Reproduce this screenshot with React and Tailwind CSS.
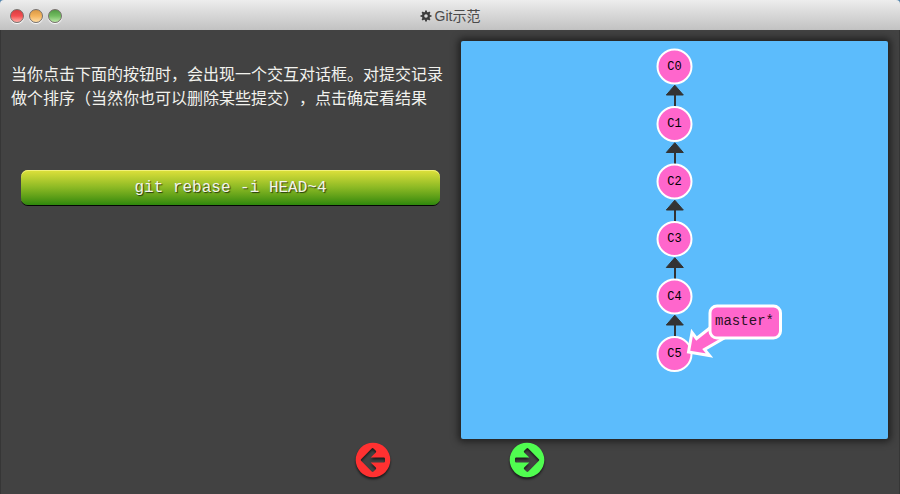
import React from "react";

const commits = ["C0", "C1", "C2", "C3", "C4", "C5"];
const STEP = 57.5;
const teeth = [0, 45, 90, 135, 180, 225, 270, 315];

function Light({ className }) {
  return (
    <span
      className={`h-[14px] w-[14px] rounded-full border-[1.5px] border-[#77706c] shadow-[0_1px_1px_#fff] ${className}`}
    />
  );
}

function Cog() {
  return (
    <svg viewBox="0 0 12 12" className="mr-[3px] h-3 w-3 fill-[#3a3a3a]">
      {teeth.map((a) => (
        <path key={a} d="M4.9 2.6 5.2.5h1.6l.3 2.1z" transform={`rotate(${a} 6 6)`} />
      ))}
      <circle cx="6" cy="6" r="2.9" fill="none" stroke="#3a3a3a" strokeWidth="2.2" />
    </svg>
  );
}

function TitleBar() {
  return (
    <header className="grid h-[30px] shrink-0 grid-cols-[1fr_auto_1fr] items-center rounded-t-[4px] bg-linear-to-b from-[#ededed] to-[#c2c2c2]">
      <div className="flex gap-[5px] pl-[10px] pt-[1px]">
        <Light className="bg-linear-to-b from-[#d93d40] via-[#f34d50] to-[#ffaaa6]" />
        <Light className="bg-linear-to-b from-[#d99845] via-[#f4b45c] to-[#ffdda4]" />
        <Light className="bg-linear-to-b from-[#529b44] via-[#72bd61] to-[#b9e7a5]" />
      </div>
      <div className="flex items-center pt-[2px] font-['Liberation_Sans','Noto_Sans_CJK_SC',sans-serif] text-[14px] leading-5 text-[#4a4a4a]">
        <Cog />
        <span>Git示范</span>
      </div>
      <div />
    </header>
  );
}

function CommitTree() {
  return (
    <svg viewBox="0 0 427 398" className="block h-[398px] w-[427px]">
      {commits.map((name, i) => {
        const y = 25.5 + i * STEP;
        return (
          <g key={name}>
            {i > 0 && (
              <g fill="#333">
                <rect x="213" y={y - 30} width="2" height="14" />
                <path
                  d={`M213.800 ${y - 38.8}l8.5 9.8h-17z`}
                  stroke="#333"
                  strokeWidth="1"
                  strokeLinejoin="round"
                />
              </g>
            )}
            <circle cx="213.5" cy={y} r="17" fill="#ff66cc" stroke="#fff" strokeWidth="2" />
            <text
              x="213.5"
              y={y + 3.3}
              textAnchor="middle"
              className="fill-black font-['Liberation_Mono',monospace] text-[12px]"
            >
              {name}
            </text>
          </g>
        );
      })}
      <path
        d="M227.5 311L231 291.500L235.500 297.500L252 284.500L265 296L243.500 308.500L248.500 314.500Z"
        fill="#ff66cc"
        stroke="#fff"
        strokeWidth="3"
      />
      <rect x="249" y="265" width="70.500" height="32" rx="7" fill="#ff66cc" stroke="#fff" strokeWidth="3" />
      <text
        x="254"
        y="284"
        textLength="59"
        className="fill-[#2b1123] font-['Liberation_Mono',monospace] text-[14px]"
      >
        master*
      </text>
    </svg>
  );
}

function NavButton({ flip, className }) {
  return (
    <button className={`h-[36px] w-[36px] ${className}`}>
      <svg
        viewBox="0 0 36 36"
        className="h-[36px] w-[36px] overflow-visible drop-shadow-[0_2px_1px_rgba(0,0,0,0.6)]"
      >
        <path
          transform={flip ? "translate(36 0) scale(-1 1)" : undefined}
          fill="currentColor"
          fillRule="evenodd"
          d="M18 .7a17.300 17.300 0 1 1 0 34.600a17.300 17.300 0 0 1 0-34.600ZM6.100 17.200L16.700 6.400Q17.600 5.500 18.500 6.400L20.800 8.700Q21.700 9.600 20.800 10.500L15.700 15.600H28.800Q30 15.600 30 16.800V19.200Q30 20.400 28.800 20.400H15.700L20.800 25.500Q21.700 26.400 20.800 27.300L18.500 29.600Q17.600 30.500 16.700 29.600L6.100 18.800Q5.300 18 6.100 17.200Z"
        />
      </svg>
    </button>
  );
}

export default function App() {
  return (
    <div className="h-[494px] w-[900px] overflow-hidden bg-[#5485ad]">
      <div className="flex h-full w-full flex-col">
        <TitleBar />
        <div className="flex grow flex-col border-x border-[#363636] bg-[#424242]">
          <main className="flex h-[409px] pt-[11px]">
            <section className="w-[460px] shrink-0 pl-[10px]">
              <p className="pt-[20px] font-['Noto_Sans_CJK_SC',sans-serif] text-[16px] leading-6 font-normal whitespace-nowrap text-[#f2f2ee] [font-kerning:none] [text-spacing-trim:space-all]">
                当你点击下面的按钮时，会出现一个交互对话框。对提交记录
                <br />
                做个排序（当然你也可以删除某些提交），点击确定看结果
              </p>
              <button className="mt-[61px] ml-[10px] flex h-[35px] w-[419px] items-center justify-center rounded-[7px] bg-linear-to-b from-[#dfe13b] via-[#8bb924] to-[#2d880d] font-['Liberation_Mono',monospace] text-[16px] text-[#f4f4ec] shadow-[0_1px_0_#050505,inset_0_1px_0_#f1f17a] [text-shadow:1px_1px_1px_rgba(0,0,0,0.65)]">
                git rebase -i HEAD~4
              </button>
            </section>
            <section className="h-[398px] w-[427px] rounded-[2px] bg-[#5cbcfc] shadow-[0_0_7px_3px_rgba(0,0,0,0.5)]">
              <CommitTree />
            </section>
          </main>
          <nav className="flex justify-center gap-[118px] pt-[3px]">
            <NavButton className="-ml-px text-[#ff3131]" />
            <NavButton flip className="text-[#50fd50]" />
          </nav>
        </div>
      </div>
    </div>
  );
}
